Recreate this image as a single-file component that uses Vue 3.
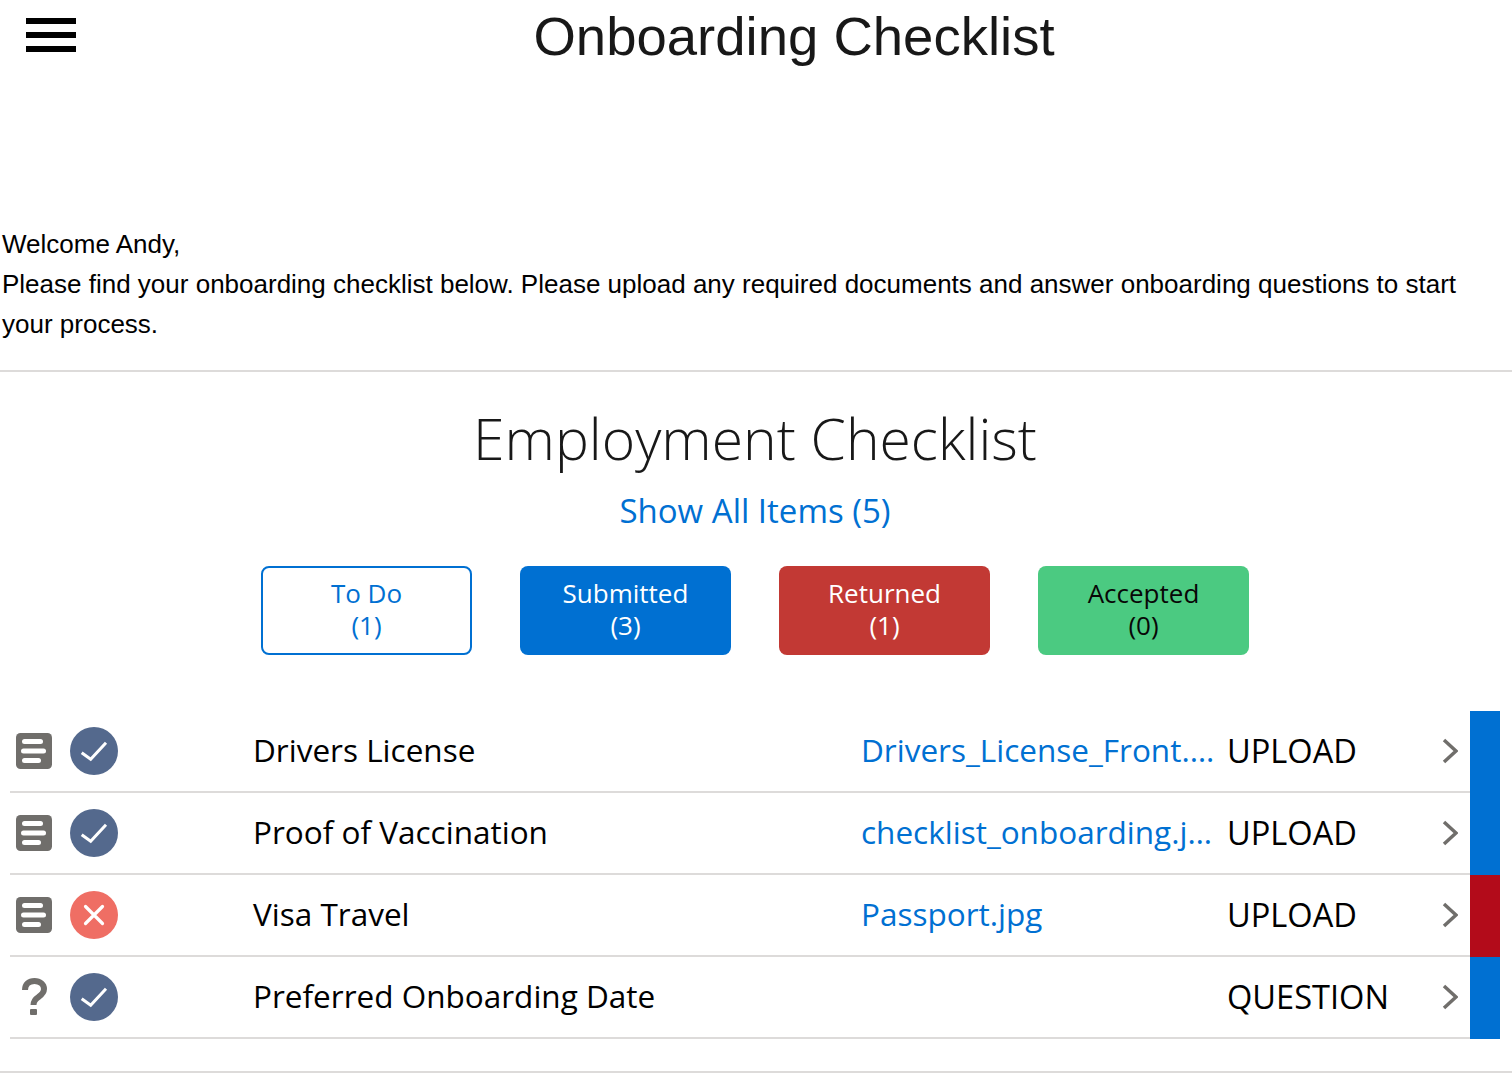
<template>
    <div class="page">
        <header class="top-bar">
            <button class="menu-button" aria-label="Menu">
                <span></span>
                <span></span>
                <span></span>
            </button>
            <h1>Onboarding Checklist</h1>
        </header>

        <p class="welcome">
            Welcome Andy,<br>
            Please find your onboarding checklist below. Please upload any required documents and answer onboarding questions to start your process.
        </p>

        <section class="checklist">
            <h2>Employment Checklist</h2>
            <a class="show-all">Show All Items (5)</a>

            <div class="filters">
                <button
                    v-for="filter in filters"
                    :key="filter.label"
                    :class="['filter', filter.kind]"
                >
                    {{ filter.label }}<br>({{ filter.count }})
                </button>
            </div>

            <div class="rows">
                <div class="row" v-for="item in items" :key="item.title">
                    <div class="type-icon">
                        <svg v-if="item.type === 'UPLOAD'" width="36" height="36" viewBox="0 0 36 36">
                            <rect width="36" height="36" rx="4.5" fill="#706e6b" />
                            <rect x="6" y="6" width="21" height="5" rx="2.5" fill="#fff" />
                            <rect x="5" y="15.5" width="25" height="5" rx="2.5" fill="#fff" />
                            <rect x="6" y="25" width="19" height="5" rx="2.5" fill="#fff" />
                        </svg>
                        <svg v-else width="36" height="40" viewBox="0 0 36 40">
                            <path d="M9 13 C9 7 13 4 18.500 4 C24 4 28 7.500 28 12 C28 15.500 26 17.500 22.500 20 C19.500 22 17.500 24 17.500 28" fill="none" stroke="#706e6b" stroke-width="6" />
                            <rect x="14" y="32" width="7" height="6" rx="1" fill="#706e6b" />
                        </svg>
                    </div>
                    <div :class="['status-icon', item.status]">
                        <svg v-if="item.status === 'done'" width="28" height="28" viewBox="0 0 28 28">
                            <path d="M1.700 15.700 L10.700 22.300 L26 5.700" fill="none" stroke="#fff" stroke-width="3" />
                        </svg>
                        <svg v-else width="24" height="24" viewBox="0 0 24 24">
                            <path d="M3.500 3.500 L20.500 20.500 M20.500 3.500 L3.500 20.500" fill="none" stroke="#fff" stroke-width="3.200" stroke-linecap="round" />
                        </svg>
                    </div>
                    <div class="title">{{ item.title }}</div>
                    <a class="file">{{ item.file }}</a>
                    <div class="kind">{{ item.type }}</div>
                    <svg class="chevron" width="16" height="26" viewBox="0 0 16 26">
                        <path d="M2 2 L14 13 L2 24" fill="none" stroke="#706e6b" stroke-width="3.500" />
                    </svg>
                    <div :class="['state-bar', item.status]"></div>
                </div>
            </div>
        </section>

        <div class="bottom-line"></div>
    </div>
</template>

<script setup>
const filters = [
    { label: 'To Do', count: 1, kind: 'todo' },
    { label: 'Submitted', count: 3, kind: 'submitted' },
    { label: 'Returned', count: 1, kind: 'returned' },
    { label: 'Accepted', count: 0, kind: 'accepted' },
];

const items = [
    { title: 'Drivers License', file: 'Drivers_License_Front.png', type: 'UPLOAD', status: 'done' },
    { title: 'Proof of Vaccination', file: 'checklist_onboarding.jpg', type: 'UPLOAD', status: 'done' },
    { title: 'Visa Travel', file: 'Passport.jpg', type: 'UPLOAD', status: 'failed' },
    { title: 'Preferred Onboarding Date', file: '', type: 'QUESTION', status: 'done' },
];
</script>

<style>
html,
body {
    background: #fff;
}
</style>

<style scoped>
.page {
    color: #000;
    font-family: "Open Sans", sans-serif;
    height: 1080px;
    overflow: hidden;
    width: 1512px;
}

/* Header */
.top-bar {
    display: flex;
    height: 224px;
    position: relative;
}

.menu-button {
    background: none;
    border: 0;
    display: flex;
    flex-direction: column;
    gap: 8px;
    height: 34px;
    margin: 18px 0 0 26px;
    padding: 0;
    width: 50px;
}

.menu-button span {
    background: #000;
    display: block;
    height: 6px;
    width: 50px;
}

.top-bar h1 {
    color: #181818;
    flex: 1;
    font-family: "Liberation Sans", sans-serif;
    font-size: 54.5px;
    font-weight: 400;
    line-height: 74px;
    margin: 0;
    padding-right: 0;
    text-align: center;
}

/* Welcome text */
.welcome {
    border-bottom: 2px solid #dddbda;
    font-family: "Liberation Sans", sans-serif;
    font-size: 26px;
    line-height: 40px;
    margin: 0;
    padding: 0 0 26px 2px;
}

/* Checklist */
.checklist {
    display: flex;
    flex-direction: column;
    margin: 0 12px 0 10px;
}

.checklist h2 {
    color: #181818;
    font-size: 57px;
    font-weight: 300;
    line-height: 76px;
    margin: 28px 0 0;
    text-align: center;
}

.show-all {
    color: #0070d2;
    font-size: 33px;
    line-height: 44px;
    margin-top: 13px;
    text-align: center;
}

.filters {
    display: flex;
    gap: 48px;
    justify-content: center;
    margin-top: 33px;
}

.filter {
    border: 2px solid transparent;
    border-radius: 8px;
    font-family: "Open Sans", sans-serif;
    font-size: 26px;
    height: 89px;
    line-height: 32px;
    padding: 0 0 4px;
    width: 211px;
}

.filter.todo {
    background: #fff;
    border-color: #0070d2;
    color: #0070d2;
}

.filter.submitted {
    background: #0070d2;
    color: #fff;
}

.filter.returned {
    background: #c23934;
    color: #fff;
}

.filter.accepted {
    background: #4bca81;
    color: #080707;
}

.rows {
    margin-top: 56px;
}

.row {
    align-items: center;
    border-bottom: 2px solid #dddbda;
    box-sizing: border-box;
    display: flex;
    height: 82px;
    position: relative;
}

.type-icon {
    display: flex;
    flex-shrink: 0;
    justify-content: center;
    margin-left: 6px;
    width: 36px;
}

.status-icon {
    align-items: center;
    border-radius: 50%;
    display: flex;
    flex-shrink: 0;
    height: 48px;
    justify-content: center;
    margin-left: 18px;
    width: 48px;
}

.status-icon.done {
    background: #54698d;
}

.status-icon.failed {
    background: #ef6e64;
}

.title {
    flex-shrink: 0;
    font-size: 31.5px;
    margin-bottom: 4px;
    margin-left: 135px;
    width: 608px;
}

.file {
    color: #0070d2;
    flex-shrink: 0;
    font-size: 31.5px;
    margin-bottom: 4px;
    overflow: hidden;
    text-overflow: ellipsis;
    white-space: nowrap;
    width: 358px;
}

.kind {
    flex-shrink: 0;
    font-size: 32.6px;
    margin-bottom: 2px;
    margin-left: 8px;
    width: 215px;
}

.chevron {
    flex-shrink: 0;
    margin-right: 12px;
}

.state-bar {
    align-self: stretch;
    flex-shrink: 0;
    margin-bottom: -2px;
    width: 30px;
}

.state-bar.done {
    background: #0070d2;
}

.state-bar.failed {
    background: #b30b1a;
}

.bottom-line {
    border-bottom: 2px solid #dddbda;
    margin-top: 32px;
}
</style>
